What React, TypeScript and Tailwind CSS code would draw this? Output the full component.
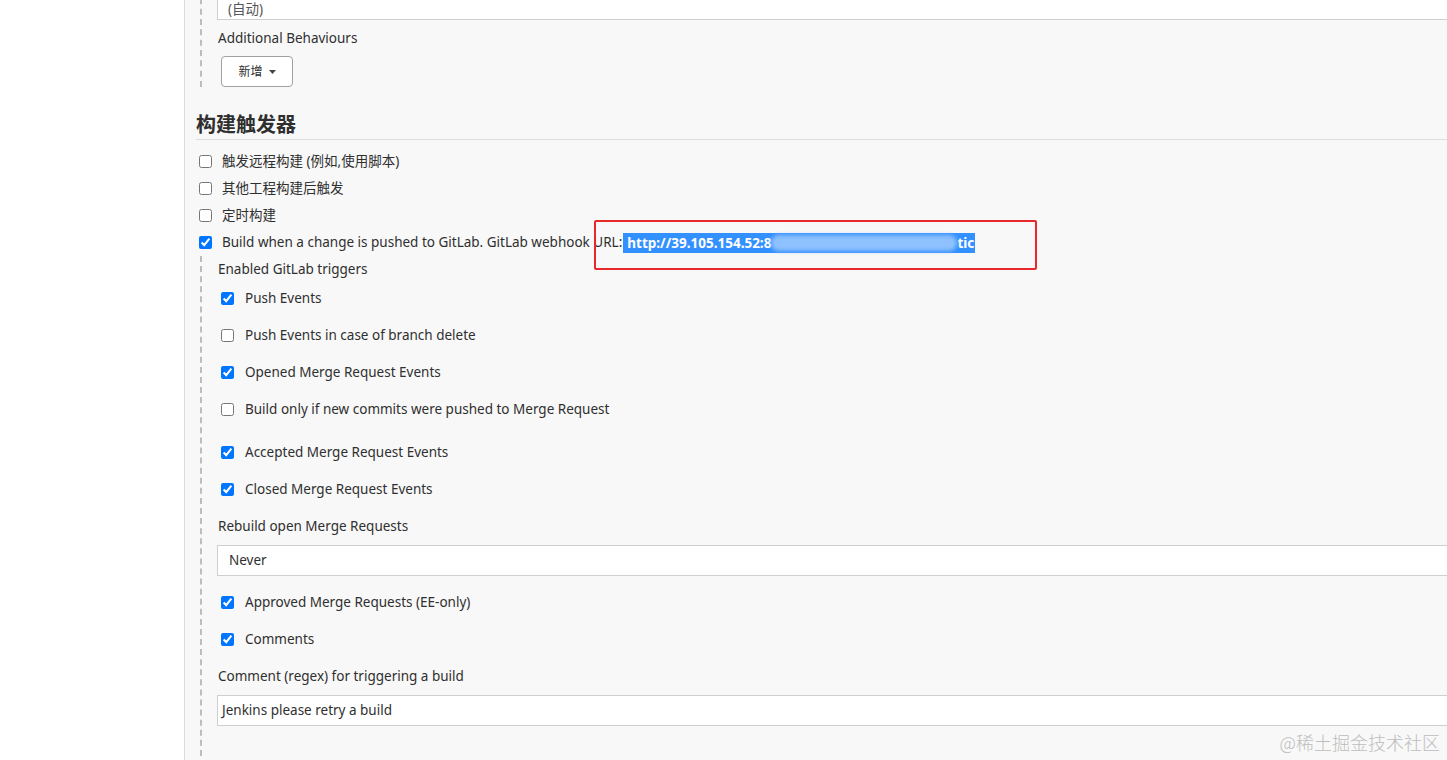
import React from "react";

// Jenkins job config – "构建触发器" section with GitLab trigger options

function TopCheck({ checked, children }: { checked?: boolean; children: React.ReactNode }) {
  return (
    <label className="h-[27px] flex items-center pl-[14px] gap-[10px]">
      <input
        type="checkbox"
        defaultChecked={checked}
        className="m-0 w-[13px] h-[13px] accent-[#0075ff]"
      />
      <span>{children}</span>
    </label>
  );
}

function SubCheck({ checked, children }: { checked?: boolean; children: React.ReactNode }) {
  return (
    <label className="h-[37px] flex items-center pl-[4px] gap-[11px]">
      <input
        type="checkbox"
        defaultChecked={checked}
        className="m-0 w-[13px] h-[13px] accent-[#0075ff]"
      />
      <span>{children}</span>
    </label>
  );
}

export default function App() {
  return (
    <div className="h-[760px] w-full flex overflow-hidden text-[13.5px] text-[#2f2f2f] font-['Noto_Sans','Noto_Sans_CJK_SC',sans-serif]">
      {/* left side panel */}
      <div className="w-[185px] shrink-0 bg-white border-r border-[#dcdcdc]" />

      {/* main form */}
      <div className="flex-1 relative bg-[#f8f8f8] overflow-hidden">
        {/* SCM tail */}
        <div className="ml-[15px] border-l-2 border-dashed border-[#bdbdbd] pl-[15px]">
          <div className="-mt-[12px] -mr-[20px] h-[32px] bg-white border border-[#cfcfcf] flex items-end pb-[3px] pl-[10px] leading-[14px] text-[#555]">
            (自动)
          </div>
          <div className="h-[36px] flex items-center pl-[1px]">Additional Behaviours</div>
          <button className="ml-[4px] h-[31px] w-[72px] bg-white border-[1.5px] border-[#a0a0a0] rounded-[4px] flex items-center justify-center gap-[6px] text-[12px]">
            新增
            <svg width="7" height="4" viewBox="0 0 7 4">
              <path d="M0 0h7L3.5 4z" fill="#444" />
            </svg>
          </button>
        </div>

        {/* 构建触发器 */}
        <div className="mt-[24px] ml-[11px] h-[29px] border-b border-[#dedede] text-[20px] leading-[28px] font-bold">
          构建触发器
        </div>
        <div className="pt-[8px]">
          <TopCheck>触发远程构建 (例如,使用脚本)</TopCheck>
          <TopCheck>其他工程构建后触发</TopCheck>
          <TopCheck>定时构建</TopCheck>
          <TopCheck checked>
            Build when a change is pushed to GitLab. GitLab webhook URL:
            <span className="ml-[1px] inline-flex items-center h-[20px] bg-[#3390ff] text-white font-bold pl-[4px] pr-[1px] align-middle">
              http://39.105.154.52:8
              <span className="inline-block w-[186px] h-[16px] rounded-full bg-[#8fc1ff] blur-[2px]" />
              tic
            </span>
          </TopCheck>
        </div>

        <div className="ml-[15px] border-l-2 border-dashed border-[#bdbdbd] pl-[15px] pt-[2px] pb-[40px]">
          <div className="h-[22px] flex items-center pl-[1px]">Enabled GitLab triggers</div>
          <SubCheck checked>Push Events</SubCheck>
          <SubCheck>Push Events in case of branch delete</SubCheck>
          <SubCheck checked>Opened Merge Request Events</SubCheck>
          <SubCheck>Build only if new commits were pushed to Merge Request</SubCheck>
          <div className="h-[6px]" />
          <SubCheck checked>Accepted Merge Request Events</SubCheck>
          <SubCheck checked>Closed Merge Request Events</SubCheck>
          <div className="h-[37px] flex items-center pl-[1px]">Rebuild open Merge Requests</div>
          <div className="-mr-[20px] h-[31px] bg-white border border-[#cfcfcf] flex items-center pl-[11px]">
            Never
          </div>
          <div className="h-[8px]" />
          <SubCheck checked>Approved Merge Requests (EE-only)</SubCheck>
          <SubCheck checked>Comments</SubCheck>
          <div className="h-[37px] flex items-center pl-[1px]">Comment (regex) for triggering a build</div>
          <div className="-mr-[20px] h-[31px] bg-white border border-[#cfcfcf] flex items-center pl-[4px]">
            Jenkins please retry a build
          </div>
        </div>

        {/* red annotation box */}
        <div className="absolute left-[409px] top-[220px] w-[443px] h-[50px] border-2 border-[#e8292b] rounded-[2px]" />

        {/* watermark */}
        <div className="absolute right-[7px] bottom-[4px] text-[18px] text-[#bdbdbd] font-['Noto_Sans_CJK_SC',sans-serif] font-light">
          @稀土掘金技术社区
        </div>
      </div>
    </div>
  );
}
